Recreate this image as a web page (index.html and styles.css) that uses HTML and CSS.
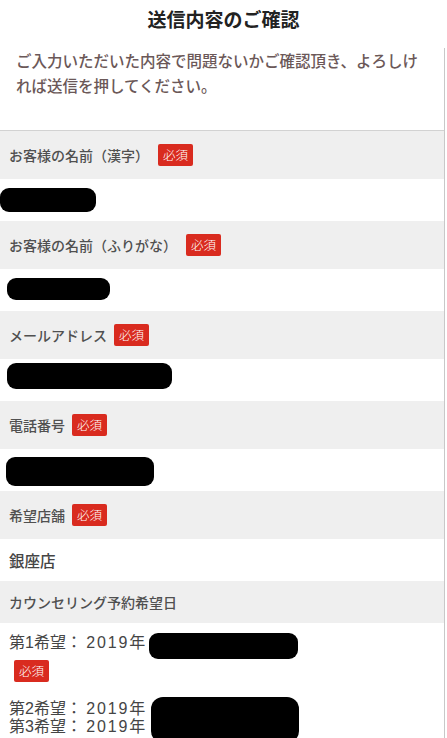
FILE: index.html
```html
<!DOCTYPE html>
<html lang="ja">
<head>
<meta charset="utf-8">
<title>送信内容のご確認</title>
<link rel="stylesheet" href="styles.css">
</head>
<body>
<header class="title">送信内容のご確認</header>
<main class="sheet">
  <p class="lead">ご入力いただいた内容で問題ないかご確認頂き、よろしければ送信を押してください。</p>

  <div class="head"><span class="label">お客様の名前（漢字）</span><span class="badge badge-wide">必須</span></div>
  <div class="value"><span class="mask m1"></span></div>

  <div class="head"><span class="label">お客様の名前（ふりがな）</span><span class="badge badge-wide">必須</span></div>
  <div class="value"><span class="mask m2"></span></div>

  <div class="head"><span class="label">メールアドレス</span><span class="badge">必須</span></div>
  <div class="value"><span class="mask m3"></span></div>

  <div class="head"><span class="label">電話番号</span><span class="badge">必須</span></div>
  <div class="value"><span class="mask m4"></span></div>

  <div class="head"><span class="label">希望店舗</span><span class="badge">必須</span></div>
  <div class="value"><span class="text">銀座店</span></div>

  <div class="head plain"><span class="label">カウンセリング予約希望日</span></div>
  <div class="dates">
    <div class="date-row">
      <span class="date-text">第1希望： <span class="num">2019</span>年</span>
      <span class="mask m5"></span>
    </div>
    <span class="badge badge-under">必須</span>
    <div class="date-row date-more">
      <div class="date-lines">
        <span class="date-text">第2希望： <span class="num">2019</span>年</span>
        <span class="date-text">第3希望： <span class="num">2019</span>年</span>
      </div>
      <span class="mask m6"></span>
    </div>
  </div>
</main>
</body>
</html>
```
FILE: styles.css
```css
html, body {
  margin: 0;
  padding: 0;
  background: #fff;
}
body {
  width: 447px;
  height: 738px;
  overflow: hidden;
  font-family: "Liberation Sans", "Noto Sans CJK JP", sans-serif;
}
.title {
  height: 48px;
  box-sizing: border-box;
  padding-top: 6px;
  line-height: 26px;
  text-align: center;
  font-family: "Noto Sans CJK JP", sans-serif;
  font-weight: 700;
  font-size: 19px;
  color: #222;
}
.sheet {
  width: 445px;
  border-right: 1px solid #c8c8c8;
  box-sizing: border-box;
}
.lead {
  margin: 0;
  padding: 0 16px 32px 16px;
  font-family: "Noto Sans CJK JP", sans-serif;
  font-weight: 500;
  font-size: 15.5px;
  line-height: 25px;
  color: #6b5858;
  border-bottom: 1px solid #d2d2d2;
}
.head {
  display: flex;
  align-items: center;
  padding: 11px 9px;
  background: #efefef;
}
.head .label {
  font-family: "Noto Sans CJK JP", sans-serif;
  font-weight: 500;
  font-size: 14px;
  line-height: 20px;
  color: #505050;
}
.badge {
  display: inline-flex;
  align-items: center;
  justify-content: center;
  width: 35px;
  height: 22px;
  margin: 2px 0 2px 7px;
  background: #d92b1f;
  border-radius: 2px;
  color: #fff;
  font-family: "Noto Sans CJK JP", sans-serif;
  font-weight: 300;
  font-size: 12.5px;
  line-height: 1;
}
.badge-wide {
  margin-left: 9px;
}
.value {
  display: flex;
  align-items: center;
  height: 42px;
  padding: 0 9px;
}
.value .text {
  font-family: "Noto Sans CJK JP", sans-serif;
  font-weight: 500;
  font-size: 15.5px;
  color: #454545;
}
.mask {
  display: block;
  background: #000;
  border-radius: 9px;
}
.m1 { width: 96px; height: 24px; margin-left: -9px; }
.m2 { width: 103px; height: 22px; margin-left: -2px; margin-top: -2px; }
.m3 { width: 165px; height: 26px; margin-left: -2px; margin-top: -8px; }
.m4 { width: 148px; height: 29px; margin-left: -3px; margin-top: 3px; }
.dates {
  display: flex;
  flex-direction: column;
  align-items: flex-start;
  padding: 11px 9px 0;
}
.date-row {
  display: flex;
  align-items: flex-start;
}
.date-lines {
  display: flex;
  flex-direction: column;
}
.date-text {
  font-size: 16px;
  line-height: 18px;
  color: #454545;
  white-space: nowrap;
}
.date-text .num {
  letter-spacing: 1.8px;
}
.m5 { width: 149px; height: 26px; margin-left: 4px; margin-top: -1px; }
.badge-under {
  margin: 1px 0 0 5px;
}
.date-more {
  margin-top: 18px;
}
.m6 { width: 148px; height: 46px; margin-left: 6px; margin-top: -3px; border-radius: 12px; }
```
